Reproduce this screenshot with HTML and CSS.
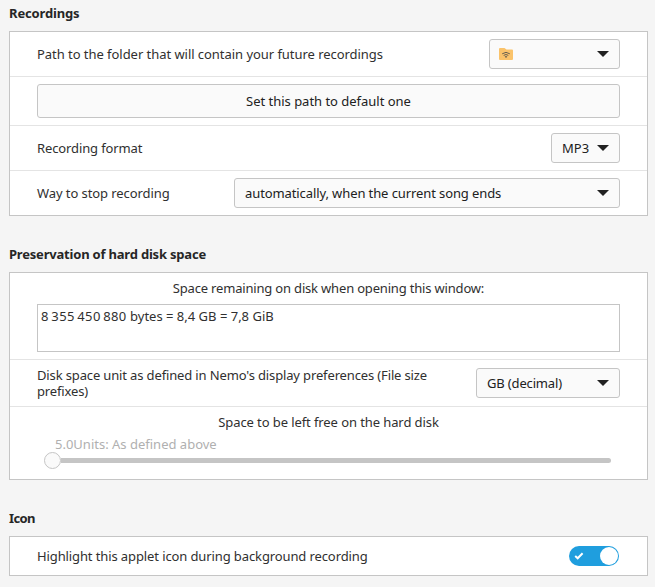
FILE: index.html
```
<!DOCTYPE html>
<html lang="en">
<head>
<meta charset="utf-8">
<title>Applet settings</title>
<link rel="stylesheet" href="styles.css">
</head>
<body>
<main class="settings">
  <section class="section">
    <h2 class="heading t-recordings">Recordings</h2>
    <div class="panel">
      <div class="row">
        <span class="label t-path">Path to the folder that will contain your future recordings</span>
        <button class="combo combo-folder">
          <svg class="folder" width="14" height="12" viewBox="0 0 14 12"><path fill="#fac36b" d="M0 1Q0 0 1 0H5.5L7.5 1.5H13Q14 1.5 14 2.5V11Q14 12 13 12H1Q0 12 0 11Z"/><g fill="none" stroke="#665e50" stroke-width="1"><path d="M3.2 5.8Q7 2.9 10.8 5.8M4.7 7.4Q7 5.6 9.3 7.4"/></g><path fill="#665e50" d="M5.7 8.4Q7 7.4 8.3 8.4L7 10Z"/></svg>
          <svg class="arrow" width="12" height="6" viewBox="0 0 12 6"><path d="M0 0H12L6 6Z"/></svg>
        </button>
      </div>
      <div class="row">
        <button class="wide"><span class="t-default">Set this path to default one</span></button>
      </div>
      <div class="row">
        <span class="label t-format">Recording format</span>
        <button class="combo combo-format"><span class="t-mp3">MP3</span><svg class="arrow" width="12" height="6" viewBox="0 0 12 6"><path d="M0 0H12L6 6Z"/></svg></button>
      </div>
      <div class="row">
        <span class="label t-way">Way to stop recording</span>
        <button class="combo combo-stop"><span class="t-auto">automatically, when the current song ends</span><svg class="arrow" width="12" height="6" viewBox="0 0 12 6"><path d="M0 0H12L6 6Z"/></svg></button>
      </div>
    </div>
  </section>
  <section class="section">
    <h2 class="heading t-preservation">Preservation of hard disk space</h2>
    <div class="panel">
      <div class="row column">
        <span class="caption t-remaining">Space remaining on disk when opening this window:</span>
        <div class="textview"><span class="t-bytes">8&#8239;355&#8239;450&#8239;880</span> bytes = 8,4 GB = 7,8 GiB</div>
      </div>
      <div class="row tall">
        <span class="label t-unit">Disk space unit as defined in Nemo's display preferences (File size prefixes)</span>
        <button class="combo combo-unit"><span class="t-gb">GB (decimal)</span><svg class="arrow" width="12" height="6" viewBox="0 0 12 6"><path d="M0 0H12L6 6Z"/></svg></button>
      </div>
      <div class="row column slider-row">
        <span class="caption t-free">Space to be left free on the hard disk</span>
        <span class="value">5.0Units: As defined above</span>
        <div class="slider"><span class="thumb"></span><span class="track"></span></div>
      </div>
    </div>
  </section>
  <section class="section">
    <h2 class="heading t-icon">Icon</h2>
    <div class="panel">
      <div class="row short">
        <span class="label t-highlight">Highlight this applet icon during background recording</span>
        <span class="switch"><svg width="10" height="8" viewBox="0 0 10 8"><path d="M1.2 4L3.7 6.3L8.6 1.3" fill="none" stroke="#fff" stroke-width="2"/></svg><span class="knob"></span></span>
      </div>
    </div>
  </section>
</main>
</body>
</html>
```
FILE: styles.css
```
* { box-sizing: border-box; }
body {
  margin: 0;
  background: #f5f5f5;
  color: #303030;
  font: 13px/16px "Noto Sans", sans-serif;
}
.settings { padding: 5px 7px 0 9px; }
.section { margin-bottom: 30px; }
.heading { margin: 0 0 10px; font-size: 13px; line-height: 16px; font-weight: 700; color: #262626; white-space: nowrap; }
.panel { border: 1px solid #c5c5c5; background: #fff; }
.row {
  display: flex;
  align-items: center;
  justify-content: space-between;
  height: 45px;
  padding: 0 27px;
  border-bottom: 1px solid #e4e4e4;
  white-space: nowrap;
}
.row:has(.wide) { height: 49px; }
.row:last-child { height: 44px; border-bottom: 0; }
button {
  margin: 0;
  border: 1px solid #c5c5c5;
  border-radius: 3px;
  background: #fafafa;
  color: #212121;
  font: inherit;
}
.wide { width: 100%; height: 34px; }
.combo { display: flex; align-items: center; justify-content: space-between; height: 30px; padding: 0 10px; }
.combo-folder { width: 131px; padding-left: 9px; }
.combo-format { width: 69px; }
.combo-stop { width: 386px; }
.combo-unit { width: 144px; }
.folder { display: block; }
.arrow { display: block; fill: #212121; }
.row.column { flex-direction: column; align-items: stretch; justify-content: flex-start; height: 87px; padding-top: 7px; }
.caption { text-align: center; }
.textview { margin-top: 8px; height: 48px; padding: 3px; border: 1px solid #c5c5c5; }
.row.tall { height: 47px; }
.row.slider-row { height: 72px; }
.value { margin: 6px 0 0 18px; color: #b0b0b0; }
.slider { display: flex; align-items: center; height: 17px; margin: 0 9px 0 7px; }
.thumb { width: 17px; height: 17px; border: 1px solid #c5c5c5; border-radius: 50%; background: #fafafa; }
.track { flex: 1; height: 5px; border-radius: 0 3px 3px 0; background: #c5c5c5; }
.row.short { height: 38px; }
.switch { display: flex; align-items: center; justify-content: space-between; width: 50px; height: 20px; margin-right: 1px; padding: 0 1px 0 5px; border-radius: 10px; background: #1f9ede; }
.knob { width: 18px; height: 18px; border-radius: 50%; background: #fff; }

/* letter fitting */
.t-recordings { letter-spacing: -.15px; }
.t-path { letter-spacing: -.045px; }
.t-default { letter-spacing: -.02px; }
.t-format { letter-spacing: -.12px; }
.t-way { letter-spacing: -.08px; }
.t-auto { letter-spacing: -.1px; }
.t-preservation { letter-spacing: -.2px; }
.t-remaining { letter-spacing: -.18px; }
.t-bytes { letter-spacing: .37px; }
.t-unit { width: 410px; letter-spacing: -.14px; white-space: normal; }
.t-gb { letter-spacing: -.16px; }
.t-free { letter-spacing: -.09px; }
.t-icon { letter-spacing: -.6px; }
.t-highlight { letter-spacing: -.11px; }
```
